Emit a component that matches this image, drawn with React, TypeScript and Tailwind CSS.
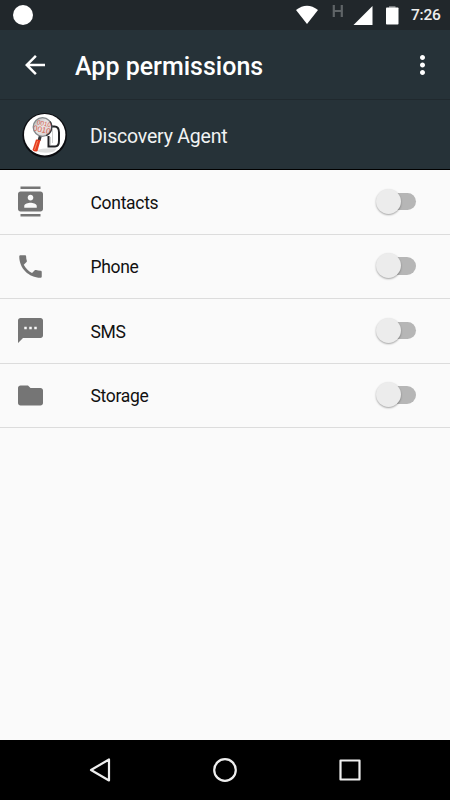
import type { ReactNode } from "react";

type Permission = { name: string; icon: ReactNode };

const permissions: Permission[] = [
  {
    name: "Contacts",
    icon: (
      <path d="M20 0H4v2h16V0zM4 24h16v-2H4v2zM20 4H4c-1.100 0-2 .9-2 2v12c0 1.100.9 2 2 2h16c1.100 0 2-.9 2-2V6c0-1.100-.9-2-2-2zm-8 2.750c1.240 0 2.250 1.010 2.250 2.250s-1.010 2.250-2.250 2.250S9.750 10.240 9.750 9 10.760 6.750 12 6.750zM17 17H7v-1.500c0-1.670 3.330-2.500 5-2.500s5 .83 5 2.500V17z" />
    ),
  },
  {
    name: "Phone",
    icon: (
      <path d="M6.620 10.790c1.440 2.830 3.760 5.140 6.590 6.590l2.200-2.200c.27-.27.67-.36 1.020-.24 1.120.37 2.330.57 3.570.57.55 0 1 .45 1 1V20c0 .55-.45 1-1 1-9.390 0-17-7.610-17-17 0-.55.45-1 1-1h3.500c.55 0 1 .45 1 1 0 1.250.2 2.450.57 3.570.11.35.03.74-.25 1.020l-2.200 2.200z" />
    ),
  },
  {
    name: "SMS",
    icon: (
      <path d="M20 2H4c-1.100 0-1.990.9-1.990 2L2 22l4-4h14c1.100 0 2-.9 2-2V4c0-1.100-.9-2-2-2zM9 11H7V9h2v2zm4 0h-2V9h2v2zm4 0h-2V9h2v2z" />
    ),
  },
  {
    name: "Storage",
    icon: (
      <path d="M10 4H4c-1.100 0-1.990.9-1.990 2L2 18c0 1.100.9 2 2 2h16c1.100 0 2-.9 2-2V8c0-1.100-.9-2-2-2h-8l-2-2z" />
    ),
  },
];

function StatusBar() {
  return (
    <div className="flex h-[30px] shrink-0 items-center bg-[#21272b] pl-[12.500px]">
      <div className="size-5 rounded-full bg-white" />
      <svg className="ml-auto h-[30px] w-[105px]" viewBox="0 0 105 30">
        <path d="M1 10Q12 1.500 23 10L12 24z" fill="#fff" />
        <path d="M38.800 5v12M46.800 5v12M38.500 11h8" stroke="#5f6467" strokeWidth="2.200" fill="none" />
        <path d="M58.500 25L77.500 6v19z" fill="#fff" />
        <path d="M94 6h6.500v2H94z" fill="#767a7d" />
        <rect x="91" y="7.500" width="12.500" height="17" rx=".8" fill="#fff" />
      </svg>
      <span className="ml-[11px] w-[39px] whitespace-nowrap pt-[2px] text-[15.500px] leading-none font-medium tracking-[-0.250px] text-[#eee]">
        7:26
      </span>
    </div>
  );
}

function AppBar() {
  return (
    <header className="flex h-[70px] shrink-0 items-center border-b border-[#20292e] bg-[#263238] pr-[12.500px] pl-5 text-white">
      <svg className="size-[30px]" viewBox="0 0 24 24" fill="currentColor">
        <path d="M20 11H7.830l5.590-5.590L12 4l-8 8 8 8 1.410-1.410L7.830 13H20v-2z" />
      </svg>
      <h1 className="ml-[25px] whitespace-nowrap pt-[3px] text-[25px] leading-none font-medium">
        App permissions
      </h1>
      <svg className="ml-auto size-[30px]" viewBox="0.400 0 24 24" fill="currentColor">
        <path d="M12 8c1.100 0 2-.9 2-2s-.9-2-2-2-2 .9-2 2 .9 2 2 2zm0 2c-1.100 0-2 .9-2 2s.9 2 2 2 2-.9 2-2-.9-2-2-2zm0 6c-1.100 0-2 .9-2 2s.9 2 2 2 2-.9 2-2-.9-2-2-2z" />
      </svg>
    </header>
  );
}

function AgentLogo() {
  return (
    <svg className="size-[46px]" viewBox="0 0 46 46">
      <defs>
        <clipPath id="lens">
          <circle cx="20.500" cy="15" r="9" />
        </clipPath>
        <linearGradient id="glass" x1="0" y1="0" x2="1" y2="1">
          <stop offset="0" stopColor="#a9adb0" />
          <stop offset=".45" stopColor="#e9e6e5" />
          <stop offset="1" stopColor="#d4c9c8" />
        </linearGradient>
      </defs>
      <circle cx="22.700" cy="23.300" r="22.300" fill="#0b0c10" />
      <circle cx="22.700" cy="22.700" r="20.700" fill="#fff" />
      <path d="M13 38.500q9-3 22-2l-3 3q-10 3-19-1z" fill="#dedede" />
      <path d="M30 14.500h2.500q4.500 0 4.500 6v8q0 6-4 6h-6.500V24" fill="none" stroke="#202124" strokeWidth="2" />
      <path d="M28.500 33V25M30.500 17v14" stroke="#c4c6c7" strokeWidth=".8" />
      <path d="M18.500 23.500l-1.500 5" stroke="#35383b" strokeWidth="3" />
      <path d="M14 27.500l4.500.5-3 11q-2.500 1.500-5-1z" fill="#e43c20" />
      <path d="M15.500 29l-3 9" stroke="#f98a62" strokeWidth="1" />
      <circle cx="20.500" cy="15" r="9.300" fill="url(#glass)" stroke="#85898c" strokeWidth="1.300" />
      <path d="M28 9.500a9.300 9.300 0 0 1-4 14.100" fill="none" stroke="#3b3e42" strokeWidth="1.300" />
      <g
        clipPath="url(#lens)"
        fill="#d8604f"
        fontFamily="'Liberation Sans', sans-serif"
        transform="rotate(12 20.500 15)"
      >
        <text x="14" y="13.500" fontSize="6.500">0010</text>
        <text x="11.500" y="20.500" fontSize="8">0010</text>
      </g>
    </svg>
  );
}

function Toggle() {
  return (
    <div className="flex h-[17.500px] w-[34px] items-center rounded-full bg-[#b6b6b6]">
      <div className="-ml-[6px] size-[25px] shrink-0 rounded-full bg-[#ececec] shadow-[0_1px_2px_rgba(0,0,0,0.35)]" />
    </div>
  );
}

function PermissionRow({ name, icon }: Permission) {
  return (
    <li className="flex h-[64.500px] items-center border-b border-[#dcdcdc] pr-[34px] pb-px pl-[15px]">
      <svg className="size-[30px] overflow-visible" viewBox="-0.400 -0.300 24 24" fill="#757575">
        {icon}
      </svg>
      <span className="ml-[45.500px] pt-[4px] text-[17.500px] leading-none tracking-[-0.300px] text-[#111]">
        {name}
      </span>
      <div className="ml-auto">
        <Toggle />
      </div>
    </li>
  );
}

function NavBar() {
  return (
    <nav className="flex h-[60px] shrink-0 items-center justify-center gap-[95px] bg-black">
      <svg className="size-[30px]" viewBox="0 0 30 30" fill="none" stroke="#eee" strokeWidth="2.200" strokeLinejoin="round">
        <path d="M24 4.500v21L6 15z" />
      </svg>
      <svg className="size-[30px]" viewBox="0 0 30 30" fill="none" stroke="#eee" strokeWidth="2.200">
        <circle cx="15" cy="15" r="10.800" />
      </svg>
      <svg className="size-[30px]" viewBox="0 0 30 30" fill="none" stroke="#eee" strokeWidth="2.200" strokeLinejoin="round">
        <rect x="5.500" y="5.500" width="19" height="19" />
      </svg>
    </nav>
  );
}

export default function App() {
  return (
    <div className="flex h-screen w-full flex-col overflow-hidden bg-[#fafafa] font-['Roboto',sans-serif]">
      <StatusBar />
      <AppBar />
      <div className="flex h-[70px] shrink-0 items-center border-b border-black bg-[#263238] pl-[22px]">
        <AgentLogo />
        <span className="ml-[22px] pt-[4.500px] text-[19.500px] leading-none tracking-[-0.200px] text-[#f1f3f3]">
          Discovery Agent
        </span>
      </div>
      <ul className="flex-1">
        {permissions.map((p) => (
          <PermissionRow key={p.name} {...p} />
        ))}
      </ul>
      <NavBar />
    </div>
  );
}
